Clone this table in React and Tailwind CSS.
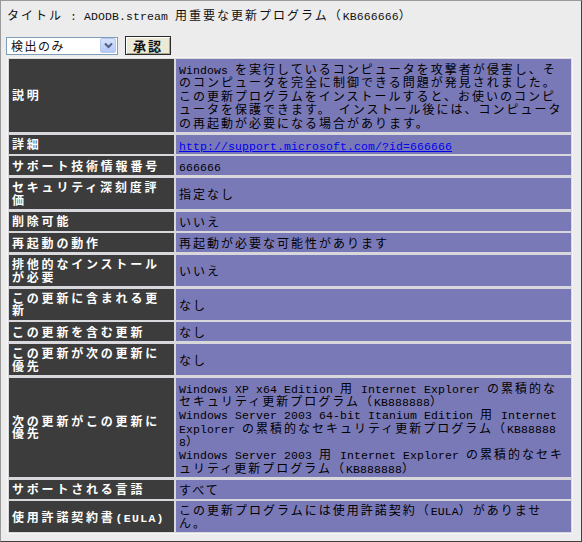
import React from "react";

const VAL_LATIN = "font-['Liberation_Mono',monospace] text-[11.5px] tracking-[0.1px]";
const LAB_LATIN = "font-['Liberation_Mono',monospace] text-[11.5px] tracking-[1.3px] font-bold";

function Mixed({ text, latin }) {
  const parts = text.split(/([\x20-\x7E]+)/);
  return parts.map((p, i) =>
    p === "" ? null : /^[\x20-\x7E]+$/.test(p) ? (
      <span key={i} className={latin}>
        {p}
      </span>
    ) : (
      <span key={i}>{p}</span>
    )
  );
}

const rows = [
  {
    label: ["説明"],
    value: [
      "Windows を実行しているコンピュータを攻撃者が侵害し、そ",
      "のコンピュータを完全に制御できる問題が発見されました。",
      "この更新プログラムをインストールすると、お使いのコンピ",
      "ュータを保護できます。 インストール後には、コンピュータ",
      "の再起動が必要になる場合があります。",
    ],
    lh: "h-[13.4px] leading-[13.4px]",
  },
  { label: ["詳細"], link: "http://support.microsoft.com/?id=666666" },
  { label: ["サポート技術情報番号"], value: ["666666"] },
  { label: ["セキュリティ深刻度評", "価"], value: ["指定なし"] },
  { label: ["削除可能"], value: ["いいえ"] },
  { label: ["再起動の動作"], value: ["再起動が必要な可能性があります"] },
  { label: ["排他的なインストール", "が必要"], value: ["いいえ"] },
  { label: ["この更新に含まれる更", "新"], value: ["なし"] },
  { label: ["この更新を含む更新"], value: ["なし"] },
  { label: ["この更新が次の更新に", "優先"], value: ["なし"] },
  {
    label: ["次の更新がこの更新に", "優先"],
    value: [
      "Windows XP x64 Edition 用 Internet Explorer の累積的な",
      "セキュリティ更新プログラム（KB888888）",
      "Windows Server 2003 64-bit Itanium Edition 用 Internet",
      "Explorer の累積的なセキュリティ更新プログラム（KB88888",
      "8）",
      "Windows Server 2003 用 Internet Explorer の累積的なセキ",
      "ュリティ更新プログラム（KB888888）",
    ],
    lh: "h-[13.3px] leading-[13.3px]",
  },
  { label: ["サポートされる言語"], value: ["すべて"] },
  {
    label: ["使用許諾契約書(EULA)"],
    value: ["この更新プログラムには使用許諾契約（EULA）がありませ", "ん。"],
    lh: "h-[12.5px] leading-[12.5px]",
  },
];

export default function App() {
  return (
    <div className="w-[582px] h-[542px] bg-[#ececec] border border-[#9a9a9a] border-r-[#404040] border-b-[#404040] overflow-hidden font-['Noto_Sans_CJK_JP',sans-serif] text-[12px] tracking-[2px] text-[#111]">
      <div className="pl-[6px] pt-[7px] h-[22px] leading-[14px] whitespace-pre">
        <Mixed text="タイトル : ADODB.stream 用重要な更新プログラム（KB666666）" latin={VAL_LATIN} />
      </div>
      <div className="flex items-center gap-[7px] pl-[5px] mt-[13px] h-[19px]">
        <div className="w-[112px] h-[18px] bg-white border border-[#7f9db9] flex items-center justify-between pl-[4px] pr-[1px]">
          <span className="leading-[14px] text-[12px] tracking-[1.5px]">検出のみ</span>
          <div className="w-[16px] h-[15px] rounded-[2px] border border-[#b7c8ee] bg-gradient-to-b from-[#d6e2fc] to-[#b5c9f7] flex items-center justify-center">
            <svg width="9" height="7" viewBox="0 0 9 7">
              <path d="M1 1.5 L4.5 5 L8 1.5" fill="none" stroke="#4d6185" strokeWidth="2" />
            </svg>
          </div>
        </div>
        <div className="w-[46px] h-[19px] border border-[#2b2b2b] bg-[#ecead6] shadow-[inset_1px_1px_0_#ffffff,inset_-1px_-1px_0_#a8a690] flex items-center justify-center font-bold text-[13px] tracking-[2px] leading-[14px]">
          承認
        </div>
      </div>
      <div className="ml-[6px] mt-[2px] w-[566px] border border-[#f6f6f6] bg-[#d8d8dc] p-[1px] grid grid-cols-[165px_1fr] gap-x-[2px] gap-y-[2.7px]">
        {rows.map((r, i) => (
          <React.Fragment key={i}>
            <div className="bg-[#3c3c3c] text-white font-bold flex flex-col justify-center pl-[3px] py-[3px] tracking-[2.8px] whitespace-pre">
              {r.label.map((l, j) => (
                <div key={j} className="h-[12.5px] leading-[12.5px]">
                  <Mixed text={l} latin={LAB_LATIN} />
                </div>
              ))}
            </div>
            <div className="bg-[#7a79b8] text-black flex flex-col justify-center pl-[3px] py-[3px] whitespace-pre">
              {r.link ? (
                <div className="h-[13px] leading-[13px]">
                  <a href="#" className={VAL_LATIN + " text-[#0000ee] underline"}>
                    {r.link}
                  </a>
                </div>
              ) : (
                r.value.map((v, j) => (
                  <div key={j} className={r.lh || "h-[13px] leading-[13px]"}>
                    <Mixed text={v} latin={VAL_LATIN} />
                  </div>
                ))
              )}
            </div>
          </React.Fragment>
        ))}
      </div>
    </div>
  );
}
